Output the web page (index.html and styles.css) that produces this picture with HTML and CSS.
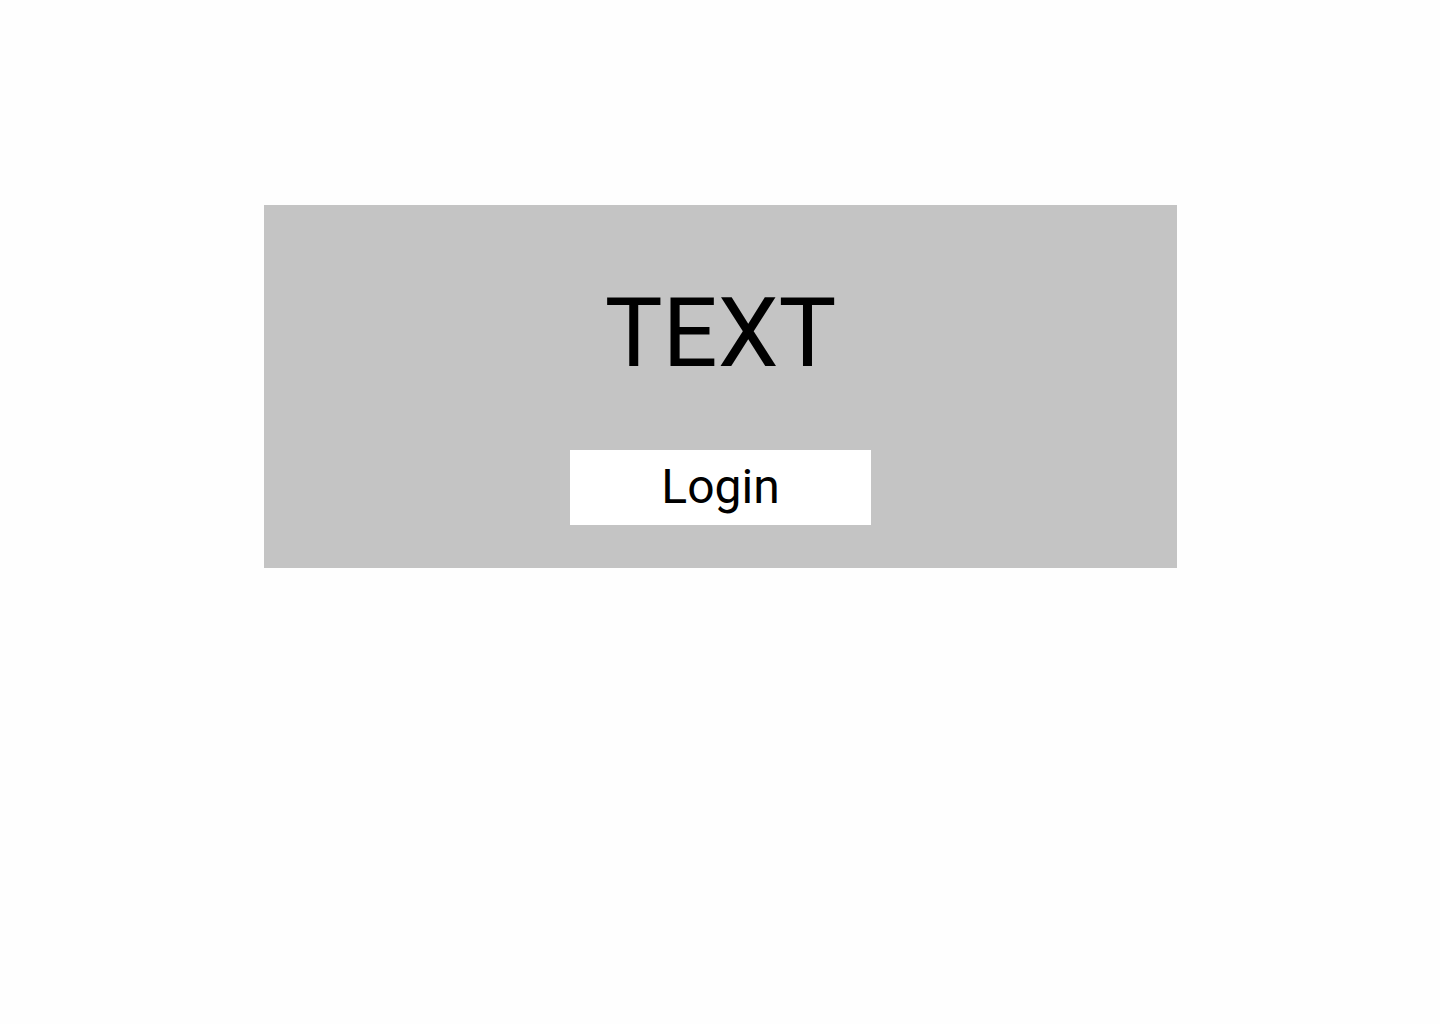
FILE: index.html
```html
<!DOCTYPE html>
<html lang="en">
<head>
<meta charset="utf-8">
<title>Login</title>
<link rel="stylesheet" href="styles.css">
</head>
<body>
<main class="page">
  <section class="card">
    <h1 class="title">TEXT</h1>
    <button class="login" type="button">Login</button>
  </section>
</main>
</body>
</html>
```

FILE: styles.css
```css
html, body {
  margin: 0;
  padding: 0;
  background: #fefefe;
  font-family: Roboto, "Liberation Sans", Arial, sans-serif;
}

.page {
  padding-top: 205px;
  padding-left: 264px;
}

.card {
  width: 913px;
  height: 363px;
  box-sizing: border-box;
  background: #c4c4c4;
  display: flex;
  flex-direction: column;
  align-items: center;
  padding-top: 80px;
}

.title {
  margin: 0;
  font-size: 97px;
  line-height: 96px;
  font-weight: 400;
  color: #000;
}

.login {
  margin-top: 69px;
  width: 301px;
  height: 75px;
  border: 0;
  padding: 0 0 2px;
  background: #ffffff;
  font-family: Roboto, "Liberation Sans", Arial, sans-serif;
  font-size: 48px;
  line-height: 73px;
  color: #000;
}
```
